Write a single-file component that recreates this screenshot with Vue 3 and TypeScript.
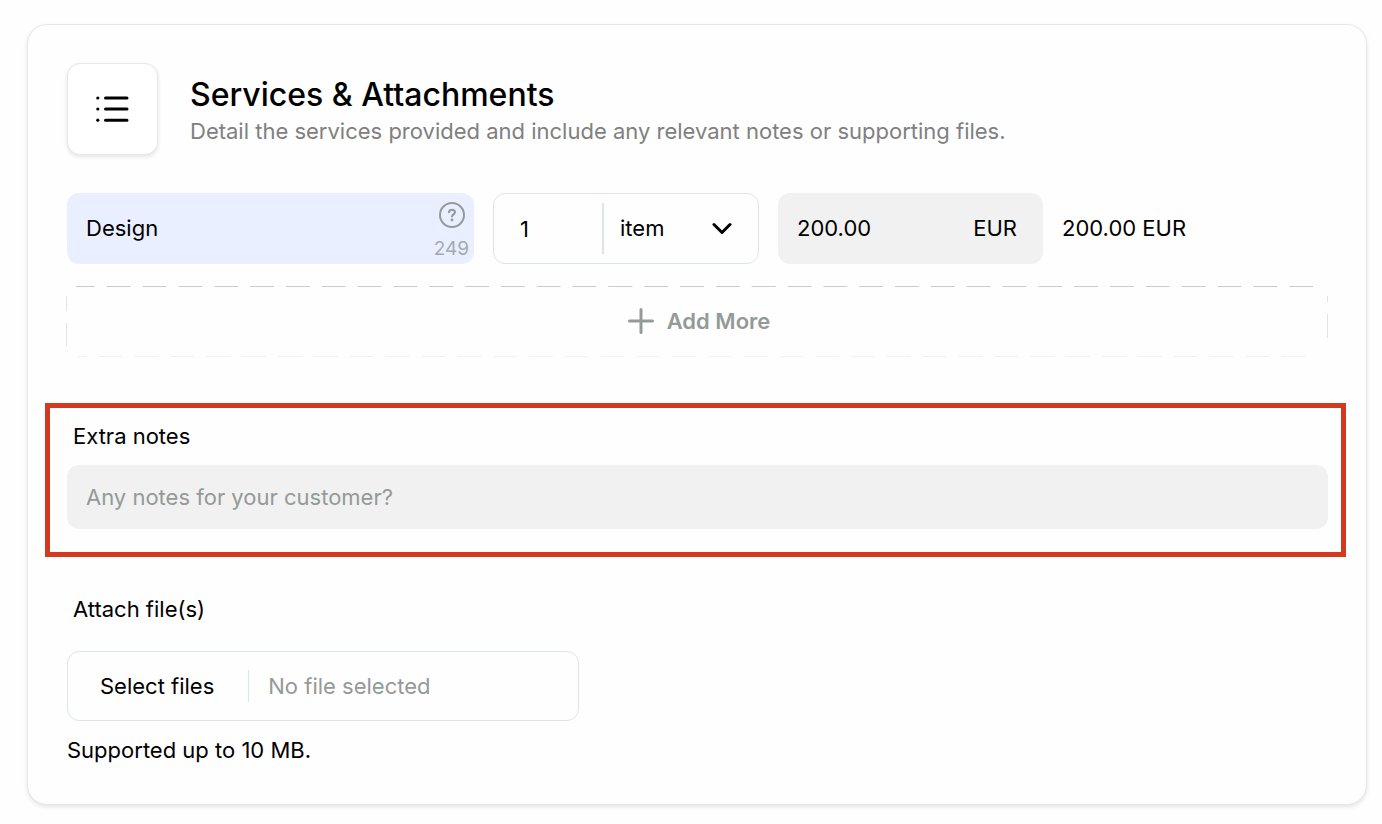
<script setup lang="ts">
import { computed, ref } from 'vue'

const description = ref('Design')
const quantity = ref('1')
const unit = ref('item')
const price = ref('200.00')
const notes = ref('')
const units = ['item', 'hour', 'day']
const maxLength = 255

const remaining = computed(() => maxLength - description.value.length)
const total = computed(() => (Number(quantity.value) * Number(price.value)).toFixed(2))

const fileInput = ref<HTMLInputElement | null>(null)
const fileName = ref('No file selected')

function pickFiles() {
  fileInput.value?.click()
}

function onFiles(event: Event) {
  const files = Array.from((event.target as HTMLInputElement).files ?? [])
  fileName.value = files.length ? files.map((f) => f.name).join(', ') : 'No file selected'
}
</script>

<template>
  <main class="page">
    <section class="card">
      <header class="head">
        <div class="badge">
          <svg width="34" height="28" viewBox="0 0 34 28" aria-hidden="true">
            <g fill="none" stroke="#000" stroke-width="3" stroke-linecap="round">
              <path d="M9.500 3H31M9.500 14H31M9.500 25.200H31" />
            </g>
            <circle cx="1.800" cy="3" r="1.600" />
            <circle cx="1.800" cy="14" r="1.600" />
            <circle cx="1.800" cy="25.200" r="1.600" />
          </svg>
        </div>
        <div class="titles">
          <h1>Services &amp; Attachments</h1>
          <p class="subtitle">Detail the services provided and include any relevant notes or supporting files.</p>
        </div>
      </header>

      <div class="row">
        <div class="field description">
          <input v-model="description" type="text" aria-label="Description" />
          <div class="aside">
            <button type="button" class="help" aria-label="Help">
              <svg width="26" height="26" viewBox="0 0 26 26" aria-hidden="true">
                <circle cx="13" cy="13" r="12" fill="none" stroke="#949a98" stroke-width="2" />
                <path d="M10 10.300C10 8.600 11.300 7.700 13 7.700C14.700 7.700 16 8.600 16 10.200C16 12.300 13 12.400 13 14.600" fill="none" stroke="#949a98" stroke-width="2" stroke-linecap="round" />
                <circle cx="13" cy="18" r="1.400" fill="#949a98" />
              </svg>
            </button>
            <span class="count">{{ remaining }}</span>
          </div>
        </div>

        <div class="field quantity">
          <input v-model="quantity" type="text" aria-label="Quantity" />
          <span class="divider"></span>
          <div class="unit">
            <select v-model="unit" aria-label="Unit">
              <option v-for="u in units" :key="u" :value="u">{{ u }}</option>
            </select>
            <svg width="20" height="13" viewBox="0 0 20 13" aria-hidden="true">
              <path d="M2 2.500L10 10.500L18 2.500" fill="none" stroke="#000" stroke-width="3" stroke-linecap="round" stroke-linejoin="round" />
            </svg>
          </div>
        </div>

        <div class="field price">
          <input v-model="price" type="text" aria-label="Price" />
          <span>EUR</span>
        </div>

        <output class="total">{{ total }} EUR</output>
      </div>

      <button type="button" class="add">
        <svg class="edge top" aria-hidden="true">
          <line x1="0" y1="0" x2="100%" y2="0" pathLength="1268" stroke-dasharray="24 12" stroke-dashoffset="-5" />
        </svg>
        <svg class="edge bottom" aria-hidden="true">
          <line x1="0" y1="0" x2="100%" y2="0" pathLength="1268" stroke-dasharray="24 12" stroke-dashoffset="3" />
        </svg>
        <svg class="edge left" aria-hidden="true">
          <line x1="0" y1="0" x2="0" y2="100%" stroke-dasharray="24 12" stroke-dashoffset="-1" />
        </svg>
        <svg class="edge right" aria-hidden="true">
          <line x1="0" y1="0" x2="0" y2="100%" stroke-dasharray="24 12" stroke-dashoffset="8" />
        </svg>
        <svg width="26" height="26" viewBox="0 0 26 26" aria-hidden="true">
          <path d="M13 1.500V24.500M1.500 13H24.500" fill="none" stroke="#949a98" stroke-width="3" stroke-linecap="round" />
        </svg>
        Add More
      </button>

      <div class="notes">
        <label for="notes">Extra notes</label>
        <input id="notes" v-model="notes" type="text" placeholder="Any notes for your customer?" />
      </div>

      <label class="attach-label" for="files">Attach file(s)</label>
      <div class="files">
        <button type="button" @click="pickFiles">Select files</button>
        <span class="file-name">{{ fileName }}</span>
        <input id="files" ref="fileInput" type="file" multiple hidden @change="onFiles" />
      </div>
      <p class="hint">Supported up to 10 MB.</p>
    </section>
  </main>
</template>

<style>
body {
  background: #fefefe;
}
</style>

<style scoped>
* {
  box-sizing: border-box;
}

.page {
  padding: 24px 15px 19px 27px;
  font-family: Inter, "Liberation Sans", sans-serif;
  font-size: 22px;
  line-height: 28px;
  color: #000;
}

input,
select,
button {
  font: inherit;
  color: inherit;
  min-width: 0;
  margin: 0;
  padding: 0;
  border: 0;
  background: none;
  outline: none;
}

button {
  cursor: pointer;
}

.card {
  padding: 38px 38px 40px 39px;
  border: 1px solid #e7e7e7;
  border-radius: 20px;
  background: #fefefe;
  box-shadow: 0 2px 4px rgba(0, 0, 0, 0.1);
}

.head {
  display: flex;
  align-items: center;
  gap: 32px;
}

.badge {
  display: flex;
  align-items: center;
  justify-content: center;
  flex: none;
  width: 91px;
  height: 92px;
  border: 1px solid #e7e7e7;
  border-radius: 13px;
  background: #fff;
  box-shadow: 0 2px 4px rgba(0, 0, 0, 0.1);
}

.titles {
  padding-top: 2px;
}

h1 {
  margin: 0;
  font-size: 32px;
  line-height: 40px;
  font-weight: 550;
}

.subtitle {
  margin: 2px 0 0;
  color: #808080;
}

.row {
  display: grid;
  grid-template-columns: minmax(0, 407fr) minmax(0, 266fr) minmax(0, 265fr) minmax(0, 266fr);
  gap: 19px;
  margin-top: 38px;
}

.field {
  display: flex;
  align-items: center;
  height: 71px;
  border-radius: 12px;
}

.description {
  padding: 0 5px 0 19px;
  background: #e9effe;
}

.description input {
  flex: 1;
  padding-bottom: 2px;
}

.aside {
  display: flex;
  flex-direction: column;
  align-items: flex-end;
  gap: 9px;
  padding-top: 5px;
}

.help {
  display: flex;
  margin-right: 4px;
}

.count {
  font-size: 19px;
  line-height: 24px;
  color: #a4aaaf;
}

.quantity {
  padding: 0 26px;
  border: 1px solid #dce7e5;
}

.quantity input {
  width: 82px;
}

.divider {
  flex: none;
  width: 2px;
  height: 51px;
  background: #dce7e5;
}

.unit {
  display: flex;
  flex: 1;
  align-items: center;
  position: relative;
}

.unit select {
  flex: 1;
  padding: 0 0 2px 16px;
  appearance: none;
}

.unit svg {
  position: absolute;
  right: 0;
  pointer-events: none;
}

.price {
  padding: 0 26px 2px 19px;
  background: #f1f1f1;
}

.price input {
  flex: 1;
}

.total {
  align-self: center;
  padding-bottom: 2px;
}

.add {
  position: relative;
  display: flex;
  align-items: center;
  justify-content: center;
  gap: 13px;
  width: 100%;
  height: 71px;
  margin-top: 22px;
  padding: 0 0 2px 3px;
  font-weight: 600;
  color: #949a98;
}

.edge {
  position: absolute;
  stroke-width: 2px;
}

.top,
.bottom {
  left: -1px;
  width: calc(100% + 1px);
  height: 1px;
}

.top {
  top: 0;
  stroke: #cbcbcb;
  clip-path: inset(0 14px 0 10px);
}

.bottom {
  bottom: 0;
  stroke: #f1f1f1;
  clip-path: inset(0 14px 0 11px);
}

.left,
.right {
  top: 0;
  width: 1px;
  height: 100%;
  stroke: #e4e4e4;
  clip-path: inset(10px 0 11px 0);
}

.left {
  left: -1px;
}

.right {
  right: 0;
}

.notes {
  display: flex;
  flex-direction: column;
  gap: 15px;
  margin: 46px -18px 0 -22px;
  padding: 14px 13px 23px 17px;
  border: 5px solid #d13a20;
}

.notes label {
  padding-left: 6px;
}

.notes input {
  height: 64px;
  padding: 0 19px;
  border-radius: 12px;
  background: #f1f1f1;
}

.notes input::placeholder {
  color: #949a98;
  opacity: 1;
}

.attach-label {
  display: block;
  margin-top: 38px;
  padding-left: 6px;
}

.files {
  display: flex;
  align-items: center;
  width: 512px;
  max-width: 100%;
  height: 70px;
  margin-top: 28px;
  border: 1px solid #dce7e5;
  border-radius: 12px;
}

.files button {
  height: 32px;
  padding: 0 34px 0 32px;
  border-right: 1px solid #dce7e5;
}

.file-name {
  padding-left: 19px;
  color: #959997;
}

.hint {
  margin: 15px 0 0;
}
</style>
